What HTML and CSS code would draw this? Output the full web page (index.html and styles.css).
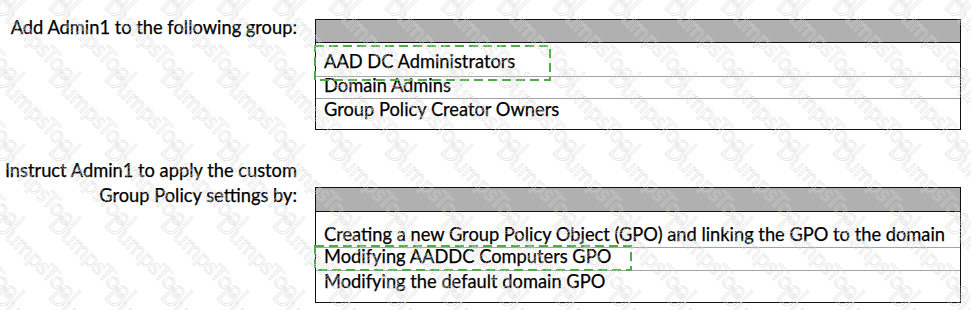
FILE: index.html
```html
<!DOCTYPE html>
<html lang="en">
<head>
<meta charset="utf-8">
<title>Admin1 tasks</title>
<link rel="stylesheet" href="styles.css">
</head>
<body>
<main class="page">
  <section class="q q1">
    <div class="label">Add Admin1 to the following group:</div>
    <div class="box">
      <div class="head"></div>
      <div class="row r1">AAD DC Administrators</div>
      <div class="row r2">Domain Admins</div>
      <div class="row r3">Group Policy Creator Owners</div>
      <svg class="pick pick1" width="238" height="37" viewBox="0 0 238 37"><rect x="1" y="1" width="235" height="34"/></svg>
    </div>
  </section>
  <section class="q q2">
    <div class="label">Instruct Admin1 to apply the custom<br>Group Policy settings by:</div>
    <div class="box">
      <div class="head"></div>
      <div class="row r1">Creating a new Group Policy Object (GPO) and linking the GPO to the domain</div>
      <div class="row r2">Modifying AADDC Computers GPO</div>
      <div class="row r3">Modifying the default domain GPO</div>
      <svg class="pick pick2" width="319" height="27" viewBox="0 0 319 27"><rect x="1" y="1" width="316" height="24"/></svg>
    </div>
  </section>
  <div class="wm" aria-hidden="true">
    <span>DumpsTool</span><span>DumpsTool</span><span>DumpsTool</span><span>DumpsTool</span><span>DumpsTool</span><span>DumpsTool</span><span>DumpsTool</span><span>DumpsTool</span><span>DumpsTool</span><span>DumpsTool</span><span>DumpsTool</span><span>DumpsTool</span><span>DumpsTool</span><span>DumpsTool</span><span>DumpsTool</span><span>DumpsTool</span><span>DumpsTool</span><span>DumpsTool</span><span>DumpsTool</span>
    <span>DumpsTool</span><span>DumpsTool</span><span>DumpsTool</span><span>DumpsTool</span><span>DumpsTool</span><span>DumpsTool</span><span>DumpsTool</span><span>DumpsTool</span><span>DumpsTool</span><span>DumpsTool</span><span>DumpsTool</span><span>DumpsTool</span><span>DumpsTool</span><span>DumpsTool</span><span>DumpsTool</span><span>DumpsTool</span><span>DumpsTool</span><span>DumpsTool</span><span>DumpsTool</span>
    <span>DumpsTool</span><span>DumpsTool</span><span>DumpsTool</span><span>DumpsTool</span><span>DumpsTool</span><span>DumpsTool</span><span>DumpsTool</span><span>DumpsTool</span><span>DumpsTool</span><span>DumpsTool</span><span>DumpsTool</span><span>DumpsTool</span><span>DumpsTool</span><span>DumpsTool</span><span>DumpsTool</span><span>DumpsTool</span><span>DumpsTool</span><span>DumpsTool</span><span>DumpsTool</span>
    <span>DumpsTool</span><span>DumpsTool</span><span>DumpsTool</span><span>DumpsTool</span><span>DumpsTool</span><span>DumpsTool</span><span>DumpsTool</span><span>DumpsTool</span><span>DumpsTool</span><span>DumpsTool</span><span>DumpsTool</span><span>DumpsTool</span><span>DumpsTool</span><span>DumpsTool</span><span>DumpsTool</span><span>DumpsTool</span><span>DumpsTool</span><span>DumpsTool</span><span>DumpsTool</span>
    <span>DumpsTool</span><span>DumpsTool</span><span>DumpsTool</span><span>DumpsTool</span><span>DumpsTool</span><span>DumpsTool</span><span>DumpsTool</span><span>DumpsTool</span><span>DumpsTool</span><span>DumpsTool</span><span>DumpsTool</span><span>DumpsTool</span><span>DumpsTool</span><span>DumpsTool</span><span>DumpsTool</span><span>DumpsTool</span><span>DumpsTool</span><span>DumpsTool</span><span>DumpsTool</span>
    <span>DumpsTool</span><span>DumpsTool</span><span>DumpsTool</span><span>DumpsTool</span><span>DumpsTool</span><span>DumpsTool</span><span>DumpsTool</span><span>DumpsTool</span><span>DumpsTool</span><span>DumpsTool</span><span>DumpsTool</span><span>DumpsTool</span><span>DumpsTool</span><span>DumpsTool</span><span>DumpsTool</span><span>DumpsTool</span><span>DumpsTool</span><span>DumpsTool</span><span>DumpsTool</span>
  </div>
</main>
</body>
</html>
```

FILE: styles.css
```css
* { box-sizing: border-box; }

html, body {
  margin: 0;
  background: #fff;
}

body {
  font-family: Lato, "Liberation Sans", sans-serif;
  font-size: 18.3px;
  color: #000;
}

.page {
  position: relative;
  width: 971px;
  height: 310px;
  overflow: hidden;
}

.q {
  display: grid;
  grid-template-columns: 300px 646px;
  column-gap: 15px;
  align-items: start;
}

.q1 { padding-top: 15px; }
.q1 .box { margin-top: 4px; }

.q2 { margin-top: 28px; }
.q2 .box { margin-top: 29px; }

.label,
.row {
  -webkit-text-stroke: 0.25px #000;
}

.label {
  text-align: right;
  line-height: 25px;
  padding-right: 3px;
  white-space: nowrap;
}

.box {
  position: relative;
  border: 1px solid #111;
}

.head {
  background: #b0b0b0;
  border-bottom: 1px solid #111;
}

.row {
  padding-left: 8px;
  line-height: 17px;
  border-top: 1px solid #a3a3a3;
  white-space: nowrap;
}

.head + .row { border-top: 0; }

.q1 .head { height: 23px; }
.q1 .r1 { height: 33px; padding-top: 10px; }
.q1 .r2 { height: 22px; padding-top: 0; }
.q1 .r3 { height: 31px; padding-top: 2px; }

.q2 .head { height: 24px; }
.q2 .r1 { height: 35px; padding-top: 14px; }
.q2 .r2 { height: 23px; padding-top: 0; }
.q2 .r3 { height: 32px; padding-top: 2px; }

.pick {
  position: absolute;
  left: -2px;
  fill: none;
  stroke: #4fab48;
  stroke-width: 2;
  stroke-dasharray: 9 5;
}

.pick1 { top: 25px; }
.pick2 { top: 57px; }

.wm {
  position: absolute;
  left: -49px;
  top: -81px;
  display: grid;
  grid-template-columns: repeat(19, 56px);
  grid-auto-rows: 72.7px;
  pointer-events: none;
}

.wm span {
  display: block;
  width: 56px;
  white-space: nowrap;
  font-size: 23px;
  line-height: 26px;
  color: transparent;
  -webkit-text-stroke: 0.45px #d6d6d6;
  transform-origin: 0 0;
  transform: rotate(45deg);
}
```
